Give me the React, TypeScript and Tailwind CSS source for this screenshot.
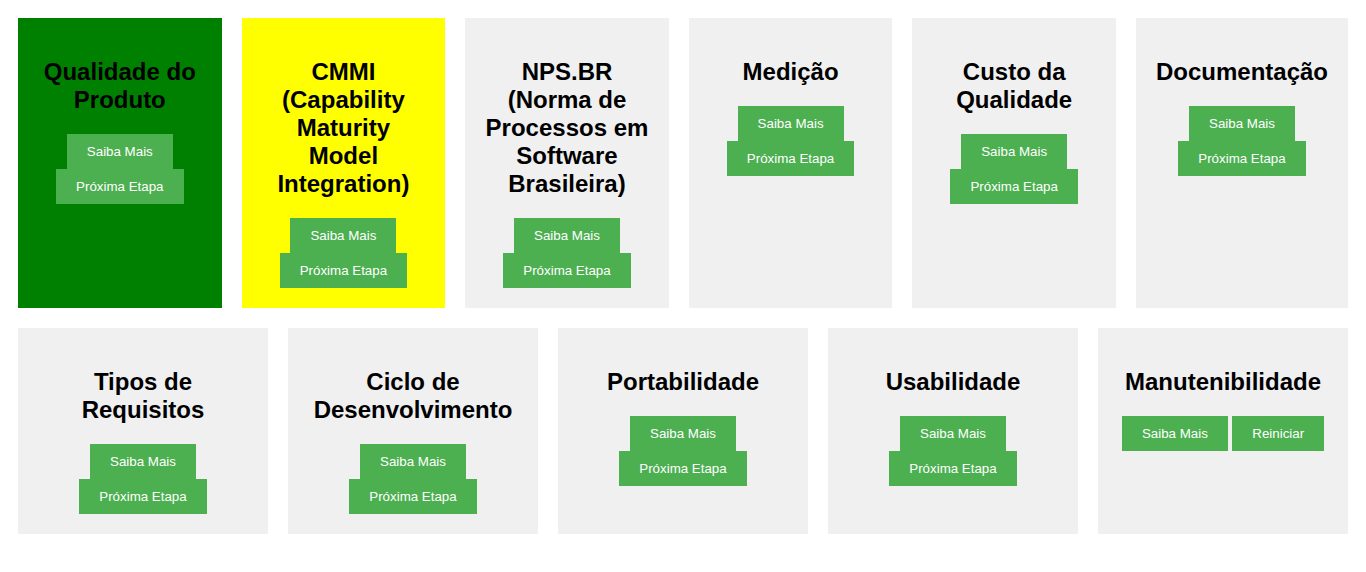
const topRow = [
  { title: "Qualidade do Produto", bg: "bg-[#008000]" },
  { title: "CMMI (Capability Maturity Model Integration)", bg: "bg-[#ffff00]" },
  { title: "NPS.BR (Norma de Processos em Software Brasileira)", bg: "bg-[#f0f0f0]" },
  { title: "Medição", bg: "bg-[#f0f0f0]" },
  { title: "Custo da Qualidade", bg: "bg-[#f0f0f0]" },
  { title: "Documentação", bg: "bg-[#f0f0f0]" },
];

const bottomRow = [
  { title: "Tipos de Requisitos", bg: "bg-[#f0f0f0]" },
  { title: "Ciclo de Desenvolvimento", bg: "bg-[#f0f0f0]" },
  { title: "Portabilidade", bg: "bg-[#f0f0f0]" },
  { title: "Usabilidade", bg: "bg-[#f0f0f0]" },
  { title: "Manutenibilidade", bg: "bg-[#f0f0f0]", last: true },
];

function Btn({ label }: { label: string }) {
  return (
    <button className="inline-block bg-[#4CAF50] text-white text-[13.333px] leading-[15px] px-5 py-2.5 align-middle">
      {label}
    </button>
  );
}

function Card({ title, bg, last }: { title: string; bg: string; last?: boolean }) {
  return (
    <div className={`flex-1 p-5 text-center ${bg}`}>
      <h2 className="my-5 text-[24px] leading-[28px] font-bold text-black">{title}</h2>
      <div className="leading-none">
        <Btn label="Saiba Mais" />{" "}
        <Btn label={last ? "Reiniciar" : "Próxima Etapa"} />
      </div>
    </div>
  );
}

export default function App() {
  return (
    <div
      className="min-h-[572px] bg-white p-[18px] flex flex-col gap-5"
      style={{ fontFamily: '"Liberation Sans", Arial, sans-serif' }}
    >
      <div className="flex gap-5">
        {topRow.map((c) => (
          <Card key={c.title} {...c} />
        ))}
      </div>
      <div className="flex gap-5">
        {bottomRow.map((c) => (
          <Card key={c.title} {...c} />
        ))}
      </div>
    </div>
  );
}
